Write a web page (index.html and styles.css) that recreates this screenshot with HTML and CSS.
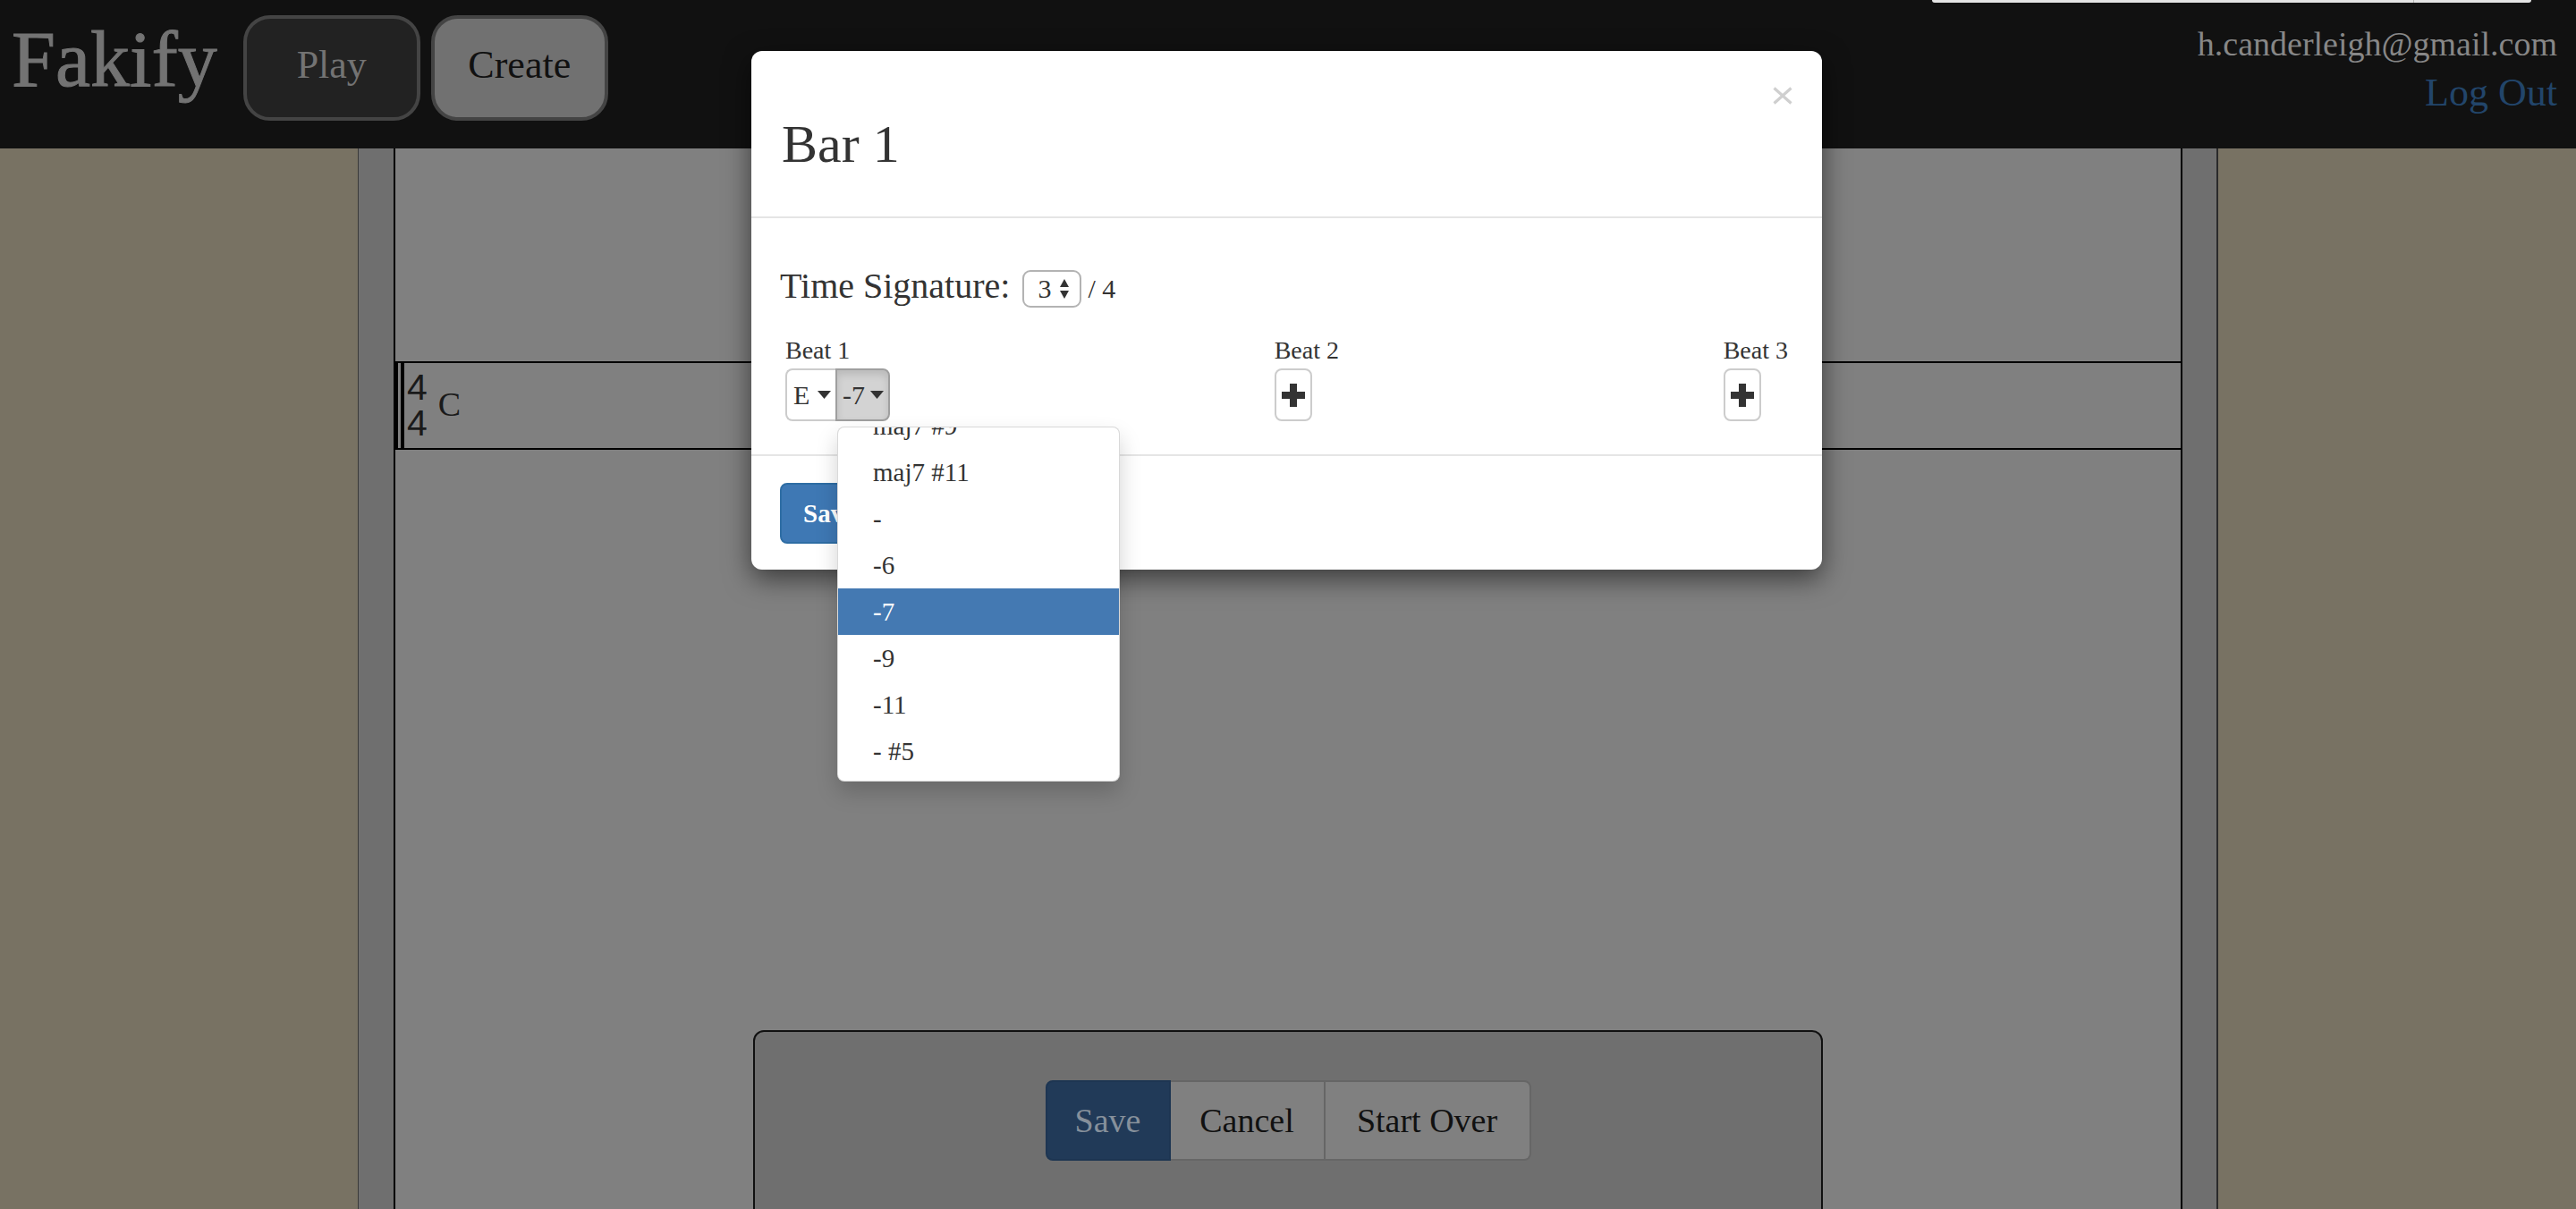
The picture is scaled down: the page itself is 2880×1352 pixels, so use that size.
FILE: index.html
```html
<!DOCTYPE html>
<html lang="en">
<head>
<meta charset="utf-8">
<title>Fakify - Create</title>
<link rel="stylesheet" href="styles.css">
</head>
<body>
  <header class="topbar">
    <div class="brand-group">
      <span class="brand">Fakify</span>
      <button class="nav-btn">Play</button>
      <button class="nav-btn nav-btn-active">Create</button>
    </div>
    <div class="account">
      <div class="email">h.canderleigh@gmail.com</div>
      <a class="logout">Log Out</a>
    </div>
  </header>

  <div class="top-strip"><span class="top-strip-divider"></span></div>

  <main class="stage">
    <div class="side"></div>
    <div class="sheet-frame">
      <div class="strip"></div>
      <div class="sheet">
        <div class="chart-row">
          <div class="barline"><span class="bar-thin"></span><span class="bar-thick"></span></div>
          <div class="timesig"><span>4</span><span>4</span></div>
          <div class="chord-name">C</div>
        </div>
        <div class="action-panel">
          <div class="btn-group">
            <button class="grp-btn grp-save">Save</button>
            <button class="grp-btn">Cancel</button>
            <button class="grp-btn">Start Over</button>
          </div>
        </div>
      </div>
      <div class="strip strip-right"></div>
    </div>
    <div class="side"></div>
  </main>

  <div class="modal">
    <div class="modal-header">
      <h4 class="modal-title">Bar 1</h4>
      <svg class="close-x" width="22" height="20" viewBox="0 0 22 20"><path d="M1.5 1.5 L20.5 18.5 M20.5 1.5 L1.5 18.5" stroke="#cfcfcf" stroke-width="3.2" fill="none"/></svg>
    </div>
    <div class="modal-body">
      <div class="time-row">
        <span class="time-label">Time Signature:</span>
        <div class="num-input">
          <span class="num-val">3</span>
          <svg class="spinner" width="14" height="26" viewBox="0 0 14 26"><polygon points="2,11 7,2 12,11" fill="#333"/><polygon points="2,15 12,15 7,24" fill="#333"/></svg>
        </div>
        <span class="time-denom">/ 4</span>
      </div>
      <div class="beats">
        <div class="beat beat-first">
          <div class="beat-label">Beat 1</div>
          <div class="chord-group">
            <div class="chord-part chord-root">E<svg class="caret" width="15" height="9" viewBox="0 0 15 9"><polygon points="0,0 15,0 7.5,9" fill="#333"/></svg></div>
            <div class="chord-part chord-quality">-7<svg class="caret" width="15" height="9" viewBox="0 0 15 9"><polygon points="0,0 15,0 7.5,9" fill="#333"/></svg></div>
          </div>
          <div class="dropdown">
            <ul class="dropdown-list">
              <li>maj7 #9</li>
              <li>maj7 #11</li>
              <li>-</li>
              <li>-6</li>
              <li class="selected">-7</li>
              <li>-9</li>
              <li>-11</li>
              <li>- #5</li>
            </ul>
          </div>
        </div>
        <div class="beat">
          <div class="beat-label">Beat 2</div>
          <div class="add-btn"><svg width="26" height="26" viewBox="0 0 26 26"><rect x="0" y="9" width="26" height="8" fill="#333"/><rect x="9" y="0" width="8" height="26" fill="#333"/></svg></div>
        </div>
        <div class="beat">
          <div class="beat-label">Beat 3</div>
          <div class="add-btn"><svg width="26" height="26" viewBox="0 0 26 26"><rect x="0" y="9" width="26" height="8" fill="#333"/><rect x="9" y="0" width="8" height="26" fill="#333"/></svg></div>
        </div>
      </div>
    </div>
    <div class="modal-footer">
      <button class="save-btn">Save</button>
    </div>
  </div>
</body>
</html>
```

FILE: styles.css
```css
html, body {
  margin: 0;
  padding: 0;
}

body {
  width: 2880px;
  height: 1352px;
  overflow: hidden;
  position: relative;
  background: #787263;
  font-family: "Liberation Serif", "Times New Roman", serif;
  color: #333;
}

/* ---------- top bar ---------- */
.topbar {
  height: 166px;
  background: #111;
  display: flex;
  justify-content: space-between;
  align-items: flex-start;
  padding: 0 21px 0 13px;
  box-sizing: border-box;
}

.brand-group {
  display: flex;
  align-items: flex-start;
}

.brand {
  font-size: 88px;
  line-height: 88px;
  color: #737373;
  margin-top: 23px;
  margin-right: 29px;
  -webkit-text-stroke: 1px #737373;
}

.nav-btn {
  width: 198px;
  height: 118px;
  margin-top: 17px;
  margin-right: 12px;
  border: 4px solid #444;
  border-radius: 30px;
  background: #222;
  color: #737373;
  font-family: "Liberation Serif", "Times New Roman", serif;
  font-size: 44px;
  padding: 0 0 8px 0;
  box-sizing: border-box;
}

.nav-btn-active {
  background: #717171;
  color: #111;
}

.account {
  display: flex;
  flex-direction: column;
  align-items: flex-end;
  padding-top: 30px;
}

.email {
  font-size: 38px;
  line-height: 38px;
  color: #878787;
}

.logout {
  font-size: 44px;
  line-height: 44px;
  color: #22456a;
  margin-top: 14px;
}

.top-strip {
  position: absolute;
  top: 0;
  left: 2160px;
  width: 670px;
  height: 3px;
  background: #e4e4e4;
  border-radius: 0 0 10px 10px;
}

.top-strip-divider {
  position: absolute;
  left: 538px;
  top: 0;
  width: 1px;
  height: 3px;
  background: #b8b8b8;
}

/* ---------- stage ---------- */
.stage {
  display: flex;
  height: 1186px;
  overflow: hidden;
}

.side {
  flex: 0 0 400px;
  background: #787263;
}

.sheet-frame {
  flex: 0 0 2080px;
  display: flex;
  box-sizing: border-box;
  border-left: 1px solid #3a3a3a;
  border-right: 2px solid #2a2a2a;
}

.strip {
  flex: 0 0 39px;
  background: #6f6f6f;
}

.strip-right {
  flex: 0 0 38px;
}

.sheet {
  flex: 0 0 2000px;
  box-sizing: border-box;
  border-left: 2px solid #000;
  border-right: 2px solid #000;
  background: #808080;
  display: flex;
  flex-direction: column;
}

.chart-row {
  margin-top: 238px;
  height: 95px;
  flex-shrink: 0;
  border-top: 2px solid #000;
  border-bottom: 2px solid #000;
  display: flex;
  align-items: stretch;
}

.barline {
  display: flex;
  align-items: stretch;
}

.bar-thin {
  width: 3px;
  background: #000;
}

.bar-thick {
  width: 4px;
  margin-left: 3px;
  background: #000;
}

.timesig {
  display: flex;
  flex-direction: column;
  font-family: "Liberation Sans", Arial, sans-serif;
  font-size: 41px;
  line-height: 40px;
  color: #1a1a1a;
  padding-top: 7px;
  margin-left: 3px;
}

.chord-name {
  font-size: 38px;
  line-height: 38px;
  color: #1a1a1a;
  margin-top: 27px;
  margin-left: 12px;
}

.action-panel {
  margin: 649px auto 0;
  width: 1196px;
  height: 400px;
  box-sizing: border-box;
  border: 2px solid #111;
  border-radius: 12px 12px 0 0;
  background: #6f6f6f;
  display: flex;
  justify-content: center;
  align-items: flex-start;
  padding-top: 54px;
  flex-shrink: 0;
}

.btn-group {
  display: flex;
  height: 90px;
}

.grp-btn {
  height: 90px;
  box-sizing: border-box;
  background: #808080;
  border: 2px solid #666;
  border-left-width: 0;
  color: #111;
  font-family: "Liberation Serif", "Times New Roman", serif;
  font-size: 38px;
  padding: 0;
}

.grp-btn:nth-child(2) { width: 173px; }

.grp-btn:last-child {
  width: 230px;
  border-radius: 0 8px 8px 0;
}

.grp-save {
  width: 140px;
  background: #213a58;
  border: 2px solid #1d3552;
  border-radius: 8px 0 0 8px;
  color: #86909b;
}

/* ---------- modal ---------- */
.modal {
  position: absolute;
  left: 840px;
  top: 57px;
  width: 1197px;
  background: #fff;
  border-radius: 12px;
  box-shadow: 0 10px 30px rgba(0, 0, 0, 0.55);
}

.modal-header {
  display: flex;
  justify-content: space-between;
  align-items: flex-start;
  padding: 40px 33px 48px 34px;
  border-bottom: 2px solid #e5e5e5;
}

.modal-title {
  margin: 31px 0 0 0;
  font-size: 60px;
  line-height: 66px;
  font-weight: normal;
  color: #333;
}

.close-x {
  display: block;
}

.modal-body {
  padding: 40px 30px 37px 30px;
}

.time-row {
  display: flex;
  align-items: baseline;
  padding-left: 2px;
}

.time-label {
  font-size: 40px;
  line-height: 72px;
}

.num-input {
  width: 66px;
  height: 42px;
  box-sizing: border-box;
  border: 2px solid #b3b3b3;
  border-radius: 9px;
  display: flex;
  align-items: center;
  padding-left: 15px;
  margin-left: 14px;
  font-size: 30px;
}

.spinner {
  margin-left: 8px;
}

.time-denom {
  font-size: 30px;
  margin-left: 7px;
}

.beats {
  display: flex;
  justify-content: space-between;
  padding: 0 8px;
  margin-top: 16px;
}

.beat {
  display: flex;
  flex-direction: column;
  align-items: flex-start;
}

.beat-first {
  position: relative;
}

.beat-label {
  font-size: 28px;
  line-height: 40px;
  color: #333;
}

.chord-group {
  display: flex;
  height: 59px;
}

.chord-part {
  height: 59px;
  box-sizing: border-box;
  display: flex;
  align-items: center;
  font-size: 30px;
  color: #333;
}

.chord-root {
  width: 56px;
  padding-left: 7px;
  border: 2px solid #ccc;
  border-right: none;
  border-radius: 8px 0 0 8px;
  background: #fff;
}

.chord-quality {
  width: 61px;
  padding-left: 6px;
  border: 2px solid #9f9f9f;
  border-radius: 0 8px 8px 0;
  background: #d3d3d3;
  box-shadow: inset 0 5px 8px rgba(0, 0, 0, 0.12);
}

.caret {
  margin-left: 6px;
}

.chord-root .caret {
  margin-left: 9px;
}

.add-btn {
  width: 42px;
  height: 59px;
  box-sizing: border-box;
  border: 2px solid #ccc;
  border-radius: 8px;
  background: #fff;
  display: flex;
  align-items: center;
  justify-content: center;
}

.add-btn svg {
  display: block;
}

.dropdown {
  position: absolute;
  left: 58px;
  top: 105px;
  width: 316px;
  height: 397px;
  box-sizing: border-box;
  background: #fff;
  border: 1px solid rgba(0, 0, 0, 0.15);
  border-radius: 8px;
  box-shadow: 0 12px 24px rgba(0, 0, 0, 0.18);
  overflow: hidden;
  z-index: 5;
}

.dropdown-list {
  list-style: none;
  margin: -28px 0 0 0;
  padding: 0;
}

.dropdown-list li {
  height: 52px;
  line-height: 52px;
  padding-left: 39px;
  font-size: 29px;
  color: #333;
  white-space: pre;
}

.dropdown-list li.selected {
  background: #4479b2;
  color: #fff;
}

.modal-footer {
  border-top: 2px solid #e5e5e5;
  padding: 30px 30px 29px 32px;
}

.save-btn {
  height: 68px;
  padding: 0 24px;
  background: #3e78b4;
  border: 2px solid #2e6da4;
  border-radius: 8px;
  color: #fff;
  font-family: "Liberation Serif", "Times New Roman", serif;
  font-weight: bold;
  font-size: 29px;
}
```
